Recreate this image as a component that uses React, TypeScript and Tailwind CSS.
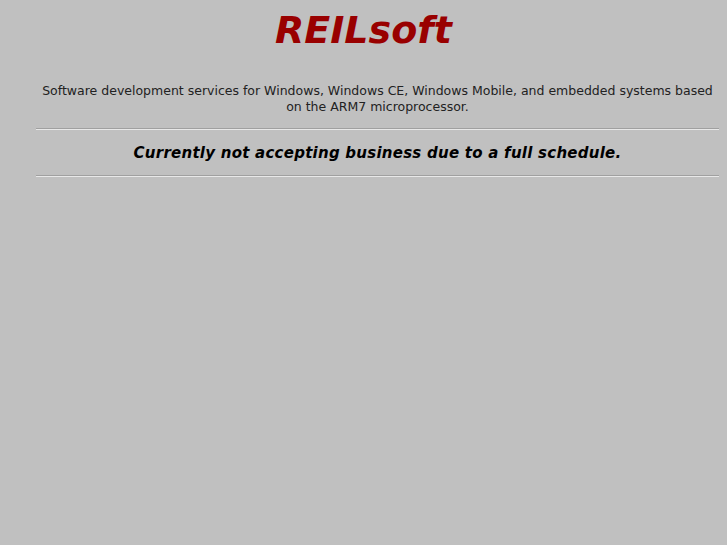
export default function App() {
  return (
    <div className="min-h-[545px] bg-[#c0c0c0] px-2 pt-[7px] font-['DejaVu_Sans',sans-serif]">
      <h1 className="text-center text-[38px] font-bold italic leading-[46px] text-[#990000]">
        REILsoft
      </h1>
      <div className="ml-[28px] mt-[30px]">
        <p className="text-center text-[12.5px] leading-[16px] text-[#222222]">
          Software development services for Windows, Windows CE, Windows Mobile, and embedded systems based on the ARM7 microprocessor.
        </p>
        <div className="mt-[13px] h-[2px] border-t border-t-[#a0a0a0] border-b border-b-[#e8e8e8]" />
        <p className="pt-[14px] pb-[12px] text-center text-[15px] font-bold italic leading-[19px] tracking-[0.25px] text-black">
          Currently not accepting business due to a full schedule.
        </p>
        <div className="h-[2px] border-t border-t-[#a0a0a0] border-b border-b-[#e8e8e8]" />
      </div>
    </div>
  );
}
